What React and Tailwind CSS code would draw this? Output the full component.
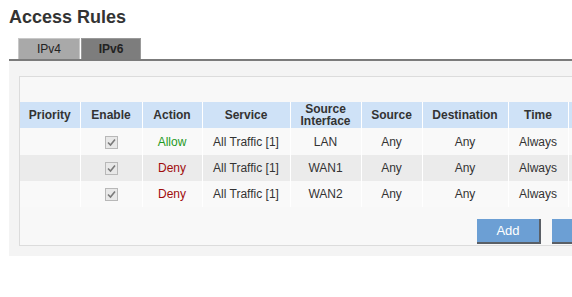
import React from "react";

const COLS = [
  { key: "priority", label: "Priority", w: 60 },
  { key: "enable", label: "Enable", w: 62 },
  { key: "action", label: "Action", w: 60 },
  { key: "service", label: "Service", w: 88 },
  { key: "iface", label: ["Source", "Interface"], w: 71 },
  { key: "source", label: "Source", w: 61 },
  { key: "dest", label: "Destination", w: 86 },
  { key: "time", label: "Time", w: 60 },
  { key: "log", label: "", w: 70 },
];

const ROWS = [
  { action: "Allow", service: "All Traffic [1]", iface: "LAN" },
  { action: "Deny", service: "All Traffic [1]", iface: "WAN1" },
  { action: "Deny", service: "All Traffic [1]", iface: "WAN2" },
];

const Check = () => (
  <span className="inline-flex w-[13px] h-[13px] items-center justify-center border border-[#b8b8b8] bg-[#e8e8e8] align-middle">
    <svg width="11" height="11" viewBox="0 0 11 11">
      <path d="M2 5.5 L4.5 8 L9 2.5" fill="none" stroke="#7a7a7a" strokeWidth="1.6" />
    </svg>
  </span>
);

export default function App() {
  return (
    <div className="w-[572px] h-[297px] overflow-hidden bg-white text-[#333] font-['Liberation_Sans',Arial,sans-serif]">
      <h1 className="pl-[9px] pt-[6px] text-[18px] leading-[22px] font-bold text-[#333]">Access Rules</h1>

      <div className="ml-[9px] mt-[10px] flex border-b-2 border-[#7b7b7b] w-[700px]">
        <div className="ml-[9px] w-[62px] h-[21px] flex items-center justify-center bg-[#a9a9a9] border-t border-x border-[#c8c8c8] text-[12px] text-[#222]">IPv4</div>
        <div className="ml-[1px] w-[60px] h-[21px] flex items-center justify-center bg-[#7d7d7d] border-t border-x border-[#999] text-[12px] font-bold text-[#222]">IPv6</div>
      </div>

      <div className="ml-[9px] w-[700px] bg-[#f4f4f4] pt-[15px] pb-[10px] pl-[10px]">
        <div className="w-[660px] border border-[#dcdcdc] bg-[#f8f8f8] pt-[25px]">
          <table className="border-collapse text-[12px]">
            <thead>
              <tr className="bg-[#cfe2f7] h-[26px]">
                {COLS.map((c) => (
                  <th
                    key={c.key}
                    style={{ width: c.w, minWidth: c.w }}
                    className="p-0 border-r border-white font-bold text-[#333] text-center leading-[12.5px]"
                  >
                    {Array.isArray(c.label) ? (
                      <>
                        {c.label[0]}
                        <br />
                        {c.label[1]}
                      </>
                    ) : (
                      c.label
                    )}
                  </th>
                ))}
              </tr>
            </thead>
            <tbody>
              {ROWS.map((r, i) => (
                <tr key={i} className={`${i === 1 ? "bg-[#ebebeb]" : "bg-[#f9f9f9]"} ${i === 0 ? "h-[27px]" : "h-[26px]"}`}>
                  <td className="p-0 border-r border-white"></td>
                  <td className="p-0 border-r border-white text-center"><Check /></td>
                  <td className={`p-0 border-r border-white text-center ${r.action === "Allow" ? "text-[#1f9a1f]" : "text-[#a00c0c]"}`}>{r.action}</td>
                  <td className="p-0 border-r border-white text-center">{r.service}</td>
                  <td className="p-0 border-r border-white text-center">{r.iface}</td>
                  <td className="p-0 border-r border-white text-center">Any</td>
                  <td className="p-0 border-r border-white text-center">Any</td>
                  <td className="p-0 border-r border-white text-center">Always</td>
                  <td className="p-0 border-r border-white text-center"></td>
                </tr>
              ))}
            </tbody>
          </table>

          <div className="mt-[12px] mb-[1px] flex gap-[11px] pl-[457px]">
            <button className="w-[64px] h-[25px] bg-[#6c9fd4] border-r-2 border-b-2 border-[#5a5f66] text-white text-[13px]">Add</button>
            <button className="w-[64px] h-[25px] bg-[#6c9fd4] border-r-2 border-b-2 border-[#5a5f66]" aria-label="more"></button>
          </div>
        </div>
      </div>
    </div>
  );
}
